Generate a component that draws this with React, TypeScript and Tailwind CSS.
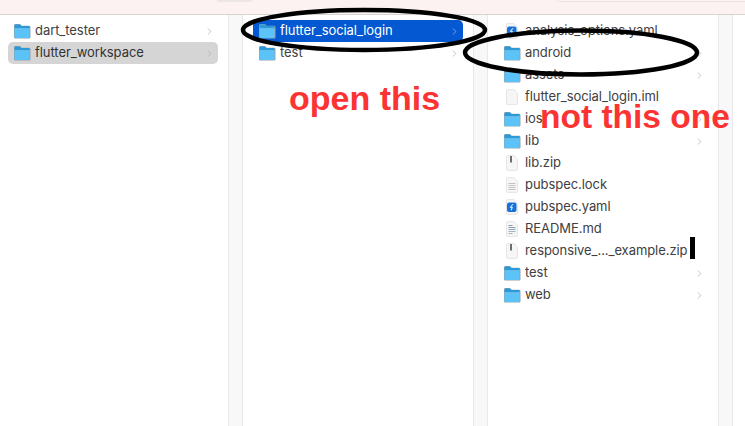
import { ChevronRight } from "lucide-react";

type Kind = "folder" | "doc" | "zip" | "lines" | "yaml" | "readme";
type Item = { name: string; kind: Kind; arrow?: boolean; state?: "selected" | "inactive" };

const COL1: Item[] = [
  { name: "dart_tester", kind: "folder", arrow: true },
  { name: "flutter_workspace", kind: "folder", arrow: true, state: "inactive" },
];
const COL2: Item[] = [
  { name: "flutter_social_login", kind: "folder", arrow: true, state: "selected" },
  { name: "test", kind: "folder", arrow: true },
];
const COL3: Item[] = [
  { name: "analysis_options.yaml", kind: "yaml" },
  { name: "android", kind: "folder", arrow: true },
  { name: "assets", kind: "folder", arrow: true },
  { name: "flutter_social_login.iml", kind: "doc" },
  { name: "ios", kind: "folder", arrow: true },
  { name: "lib", kind: "folder", arrow: true },
  { name: "lib.zip", kind: "zip" },
  { name: "pubspec.lock", kind: "lines" },
  { name: "pubspec.yaml", kind: "yaml" },
  { name: "README.md", kind: "readme" },
  { name: "responsive_..._example.zip", kind: "zip" },
  { name: "test", kind: "folder", arrow: true },
  { name: "web", kind: "folder", arrow: true },
];

function FileIcon({ kind }: { kind: Kind }) {
  if (kind === "folder") {
    return (
      <svg width="18" height="16" viewBox="0 0 18 16" className="shrink-0">
        <path d="M1 2.600C1 1.700 1.700 1 2.600 1h3.800c.6 0 1 .2 1.400.7l.8 1h7.300c.9 0 1.600.7 1.600 1.600v9.600c0 .9-.7 1.600-1.600 1.600H2.600c-.9 0-1.600-.7-1.600-1.600V2.600z" fill="#8fa3ae" />
        <path d="M1.500 2.800c0-.7.500-1.300 1.200-1.300h3.600c.6 0 .9.200 1.300.6l.8 1h7.100c.6 0 1 .4 1 1v1H1.500V2.800z" fill="#2c9ad8" />
        <path d="M1.500 5.200h15v8.500c0 .7-.5 1.200-1.200 1.200H2.700c-.7 0-1.200-.5-1.200-1.200V5.200z" fill="#5cc3f8" />
      </svg>
    );
  }
  return (
    <svg width="18" height="16" viewBox="0 0 18 16" className="shrink-0">
      <path d="M3.500 1.500C3.500 1 3.900.6 4.500.6h6.300l3.700 3.600v10.300c0 .5-.4.9-1 .9h-9c-.6 0-1-.4-1-.9V1.500z" fill="#f6f6f6" stroke="#dcdcdc" strokeWidth="0.7" />
      {kind === "zip" && <rect x="7" y="1" width="2" height="6.500" fill="#6e6e6e" />}
      {kind === "lines" && (
        <path d="M5.500 6.500h7M5.500 8.500h7M5.500 10.500h7M5.500 12.500h7" stroke="#b5b5b5" strokeWidth="0.8" />
      )}
      {kind === "readme" && (
        <>
          <path d="M5.500 4.500h4M5.500 6.500h7" stroke="#8a8f98" strokeWidth="0.9" />
          <path d="M5.500 8.500h7" stroke="#6da7d8" strokeWidth="0.9" />
          <path d="M5.500 10.500h7M5.500 12.500h4" stroke="#a9a9a9" strokeWidth="0.9" />
        </>
      )}
      {kind === "yaml" && (
        <>
          <rect x="4" y="3.500" width="9.500" height="9.500" rx="2" fill="#1672d8" />
          <path d="M10 5.200L7.300 8.300h2.100l-1.300 3" fill="none" stroke="#fff" strokeWidth="1" />
        </>
      )}
    </svg>
  );
}

function Row({ item }: { item: Item }) {
  const bg =
    item.state === "selected"
      ? "bg-[#0458d2] text-white"
      : item.state === "inactive"
        ? "bg-[#d5d5d5] text-[#333333]"
        : "text-[#404040]";
  return (
    <div className={`flex h-[22px] w-[210px] items-center rounded-[5px] pl-[5px] pr-[3px] ${bg}`}>
      <FileIcon kind={item.kind} />
      <span className="ml-[4px] flex-1 truncate text-[13px] tracking-[-0.06px]">{item.name}</span>
      {item.arrow && (
        <ChevronRight
          size={11}
          strokeWidth={1.5}
          className={item.state === "selected" ? "text-[#a9c5ef]" : "text-[#ababab]"}
        />
      )}
    </div>
  );
}

function Column({ items, first }: { items: Item[]; first?: boolean }) {
  return (
    <div className="flex shrink-0">
      <div className={`flex shrink-0 flex-col pt-[5px] ${first ? "w-[228px] pl-[8px]" : "w-[230px] pl-[10px]"}`}>
        {items.map((item) => (
          <Row key={item.name} item={item} />
        ))}
      </div>
      <div className="w-[15px] shrink-0 border-x border-[#e8e8e8] bg-[#f8f8f8]" />
    </div>
  );
}

export default function App() {
  return (
    <div className="relative h-[426px] w-[745px] overflow-hidden bg-white font-['Inter',sans-serif]">
      {/* toolbar, cut off by the crop: only the lower edges of its controls show */}
      <div className="flex h-[15px] items-start border-b border-[#d6d3d2] bg-[#fcf2f1]">
        <div className="ml-[217px] h-[2px] w-[35px] rounded-b-[3px] bg-[#ece6e5]" />
        <div className="ml-[305px] h-[2px] flex-1 rounded-bl-[3px] border-b border-l border-[#ece3e2]" />
      </div>
      <div className="flex h-[411px]">
        <Column items={COL1} first />
        <Column items={COL2} />
        <Column items={COL3} />
      </div>

      {/* annotations drawn on top of the screenshot */}
      <svg width="745" height="426" viewBox="0 0 745 426" className="absolute inset-0" fill="none">
        <ellipse cx="364" cy="30" rx="121" ry="20" stroke="#000" strokeWidth="4.500" />
        <ellipse cx="581" cy="52.500" rx="116" ry="22" stroke="#000" strokeWidth="4.500" />
        <rect x="690" y="237" width="5" height="22" fill="#000" />
      </svg>
      <div className="absolute left-[289px] top-[79px] font-['Liberation_Sans',sans-serif] text-[34px] font-bold leading-[38px] text-[#fb3333]">
        open this
      </div>
      <div className="absolute left-[540px] top-[98px] font-['Liberation_Sans',sans-serif] text-[33.5px] font-bold leading-[38px] text-[#fb3333]">
        not this one
      </div>
    </div>
  );
}
